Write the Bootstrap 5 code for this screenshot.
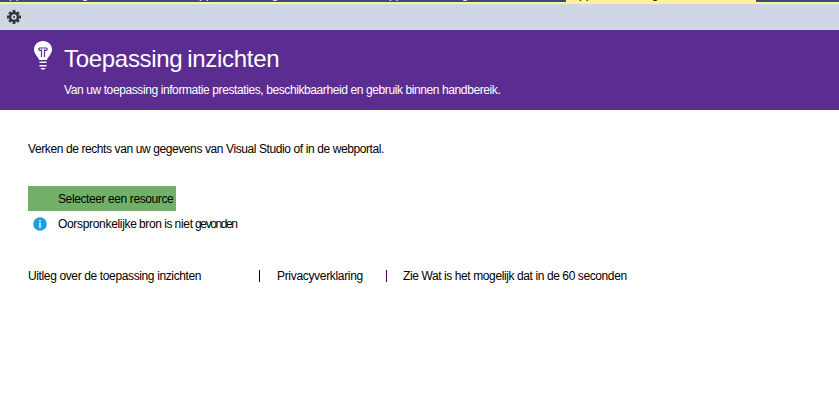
<!DOCTYPE html>
<html lang="nl">
<head>
<meta charset="utf-8">
<meta name="viewport" content="width=device-width, initial-scale=1">
<title>Toepassing inzichten</title>
<link href="https://cdn.jsdelivr.net/npm/bootstrap@5.3.0/dist/css/bootstrap.min.css" rel="stylesheet">
<style>
body{font:12px/16px "Liberation Sans",Arial,sans-serif;color:#000;background:#fff;letter-spacing:-.4px}
.doc-tabs{height:4px;background:#364e6f;border-bottom:2px solid #fff29d;color:#fff;font-size:12px;letter-spacing:0}
.doc-tab{width:190px;height:2px;padding-left:5px;line-height:16px}
.doc-tab span{display:block;margin-top:-14px}
.doc-tab:first-child{margin-left:-4px}
.doc-tab.current{background:#fff29d;color:#000}
.tool-strip{height:26px;background:#cfd6e5;padding-left:7px}
.banner{height:80px;background:#5c2d91;padding:11px 0 0 33px}
.banner h1{font-size:24px;line-height:28px;margin:4px 0 9px;font-weight:400;letter-spacing:-.3px;word-spacing:-1.5px}
.banner-copy{margin-left:11px}
.main-copy{padding:31px 28px 0}
.resource-btn{width:148px;height:25px;line-height:26px;background:#72b069;padding:0 0 0 30px;font-size:12px;color:#000;border:0;border-radius:0;text-align:left;margin-top:29px;letter-spacing:-.4px}
.notice{height:14px;margin-top:6px}
.notice svg{margin:0 11px 0 5px}
.link-row{margin-top:37px}
.rule{width:1px;height:12px;background:#000}
.rule.tinted{background:#4b0050}
.notice-lead{letter-spacing:-.32px;word-spacing:-.6px}
.tight{letter-spacing:-1.4px;margin-left:-.5px}
.l1{width:231px;letter-spacing:-.37px}.l2{width:109px;margin-left:17px;letter-spacing:-.32px}.l3{margin-left:16px}
</style>
<script src="https://cdn.jsdelivr.net/npm/bootstrap@5.3.0/dist/js/bootstrap.bundle.min.js"></script>
</head>
<body class="overflow-hidden">
<div class="doc-tabs d-flex overflow-hidden">
<div class="doc-tab flex-shrink-0 overflow-hidden"><span>Application Insights</span></div>
<div class="doc-tab flex-shrink-0 overflow-hidden"><span>Application Insights</span></div>
<div class="doc-tab flex-shrink-0 overflow-hidden"><span>Application Insights</span></div>
<div class="doc-tab current flex-shrink-0 overflow-hidden"><span>Application Insights</span></div>
</div>
<div class="tool-strip d-flex align-items-center">
<svg width="14" height="14" viewBox="0 0 14 14"><g fill="#353538"><path d="M5.600 0h2.800v3H5.600zM5.600 11h2.800v3H5.600zM0 5.600h3v2.800H0zM11 5.600h3v2.800h-3z"/><path d="M5.600 .2h2.800v3H5.600zM5.600 10.800h2.800v3H5.600zM.2 5.600h3v2.800h-3zM10.800 5.600h3v2.800h-3z" transform="rotate(45 7 7)"/></g><circle cx="7" cy="7" r="3.900" fill="none" stroke="#353538" stroke-width="2.400"/><circle cx="7" cy="7" r="1" fill="#353538"/></svg>
</div>
<header class="banner d-flex text-white">
<svg class="flex-shrink-0" width="20" height="30" viewBox="0 0 20 30"><path fill="#fff" d="M10 0C4.700 0 1 3.800 1 8.500c0 3.400 1.800 5.200 3.300 7.200 1 1.400 1.500 2.300 1.700 3.300h8c.2-1 .7-1.900 1.700-3.300C17.200 13.700 19 11.900 19 8.500 19 3.800 15.300 0 10 0z"/><path d="M8.500 16V8.500M11.500 16V8.500M8.500 9.300H6.700a1.200 1.200 0 0 1 0-2.300h6.600a1.200 1.200 0 0 1 0 2.300h-1.800" fill="none" stroke="#5c2d91" stroke-width="1.200"/><path d="M6.500 20.500h7v1.500h-7zM6.500 24h7v1.500h-7zM7.500 27h5l-1 1.500h-3z" fill="#fff"/></svg>
<div class="banner-copy">
<h1>Toepassing inzichten</h1>
<div class="text-nowrap">Van uw toepassing informatie prestaties, beschikbaarheid en gebruik binnen handbereik.</div>
</div>
</header>
<main class="main-copy">
<div>Verken de rechts van uw gegevens van Visual Studio of in de webportal.</div>
<button type="button" class="resource-btn btn d-block text-nowrap">Selecteer een resource</button>
<div class="notice d-flex align-items-center">
<svg width="14" height="14" viewBox="0 0 14 14"><circle cx="7" cy="7" r="6.800" fill="#1ba1e2"/><path fill="#fff" d="M6.300 3h1.400v1.500H6.300zM6.300 5.500h1.400V11H6.300z"/></svg>
<span><span class="notice-lead">Oorspronkelijke bron is niet</span> <span class="tight">gevonden</span></span>
</div>
<div class="link-row d-flex align-items-center text-nowrap">
<span class="l1">Uitleg over de toepassing inzichten</span><span class="rule"></span>
<span class="l2">Privacyverklaring</span><span class="rule tinted"></span>
<span class="l3">Zie Wat is het mogelijk dat in de 60 seconden</span>
</div>
</main>
</body>
</html>
